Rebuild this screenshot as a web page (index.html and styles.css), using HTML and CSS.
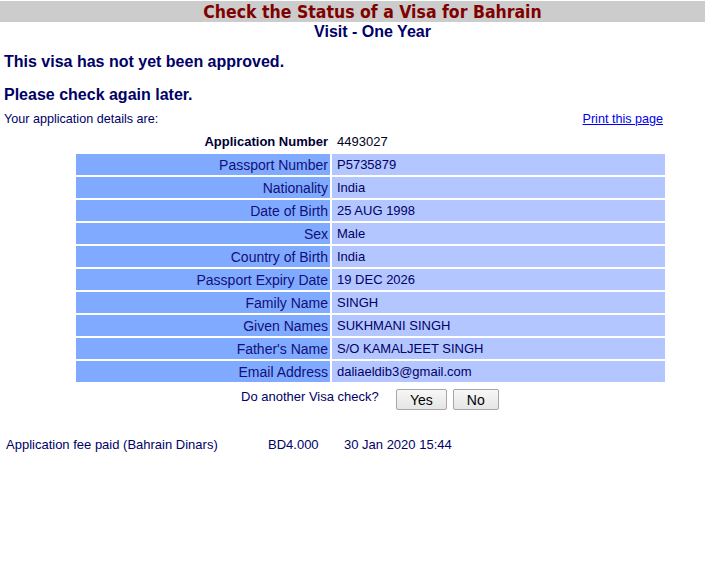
FILE: index.html
```html
<!DOCTYPE html>
<html>
<head>
<meta charset="utf-8">
<title>Check the Status of a Visa for Bahrain</title>
<link rel="stylesheet" href="styles.css">
</head>
<body>
<div class="titlebar">Check the Status of a Visa for Bahrain</div>
<div class="subtitle">Visit - One Year</div>
<div class="msg msg1">This visa has not yet been approved.</div>
<div class="msg msg2">Please check again later.</div>
<div class="detailsline">
  <span>Your application details are:</span>
  <a href="#" class="printlink">Print this page</a>
</div>
<table class="details">
  <tr class="appnum"><th>Application Number</th><td>4493027</td></tr>
  <tr><th>Passport Number</th><td>P5735879</td></tr>
  <tr><th>Nationality</th><td>India</td></tr>
  <tr><th>Date of Birth</th><td>25 AUG 1998</td></tr>
  <tr><th>Sex</th><td>Male</td></tr>
  <tr><th>Country of Birth</th><td>India</td></tr>
  <tr><th>Passport Expiry Date</th><td>19 DEC 2026</td></tr>
  <tr><th>Family Name</th><td>SINGH</td></tr>
  <tr><th>Given Names</th><td>SUKHMANI SINGH</td></tr>
  <tr><th>Father's Name</th><td>S/O KAMALJEET SINGH</td></tr>
  <tr><th>Email Address</th><td>daliaeldib3@gmail.com</td></tr>
</table>
<div class="another">
  <span class="another-q">Do another Visa check?</span>
  <button class="btn btn-yes">Yes</button>
  <button class="btn btn-no">No</button>
</div>
<div class="fee">
  <span class="fee-label">Application fee paid (Bahrain Dinars)</span>
  <span class="fee-amount">BD4.000</span>
  <span class="fee-date">30 Jan 2020 15:44</span>
</div>
</body>
</html>
```

FILE: styles.css
```css
html, body {
  margin: 0;
  padding: 0;
  background: #ffffff;
}
body {
  font-family: "Liberation Sans", Arial, sans-serif;
  color: #000066;
}
.titlebar {
  margin-top: 1px;
  height: 21px;
  line-height: 23px;
  background: #cccccc;
  color: #800000;
  font-family: "DejaVu Sans Condensed", "DejaVu Sans", sans-serif;
  font-weight: bold;
  font-stretch: condensed;
  font-size: 17.5px;
  text-align: center;
  padding-left: 40px;
}
.subtitle {
  height: 18px;
  line-height: 18px;
  padding-top: 1px;
  font-size: 16px;
  font-weight: bold;
  text-align: center;
  padding-left: 40px;
}
.msg {
  font-size: 16px;
  font-weight: bold;
  line-height: 19px;
  padding-left: 4px;
}
.msg1 { margin-top: 11px; }
.msg2 { margin-top: 14px; }
.detailsline {
  display: flex;
  justify-content: space-between;
  font-size: 12.6px;
  line-height: 15px;
  margin-top: 8px;
  padding-left: 4px;
  width: 659px;
}
.printlink {
  color: #0000ee;
}
.details {
  border-collapse: separate;
  border-spacing: 2px;
  margin-left: 74px;
  margin-top: 2px;
  width: 593px;
  font-size: 14px;
}
.details th, .details td {
  height: 21px;
  padding: 0;
  line-height: 16px;
}
.details th {
  width: 252px;
  text-align: right;
  font-weight: normal;
  background: #80aaff;
  padding-right: 2px;
  color: #10107a;
}
.details td {
  background: #b4c6ff;
  padding-left: 5px;
  font-size: 13px;
}
.details .appnum th {
  background: none;
  font-weight: bold;
  font-size: 13px;
  color: #000033;
}
.details .appnum td {
  background: none;
  color: #000022;
}
.another {
  display: flex;
  align-items: flex-start;
  padding-left: 241px;
  font-size: 13px;
}
.another-q {
  margin-top: 5px;
  margin-right: 17px;
}
.btn {
  font-family: "Liberation Sans", Arial, sans-serif;
  font-size: 14px;
  color: #000000;
  height: 21px;
  padding: 0;
  border: 1px solid #a7a7a7;
  border-radius: 2px;
  background: linear-gradient(#f7f7f7, #e5e5e5);
  margin-top: 5px;
}
.btn-yes { width: 51px; margin-right: 6px; }
.btn-no { width: 46px; }
.fee {
  display: flex;
  margin-top: 27px;
  padding-left: 6px;
  font-size: 13px;
  line-height: 16px;
}
.fee-label { width: 262px; }
.fee-amount { width: 76px; }
```
